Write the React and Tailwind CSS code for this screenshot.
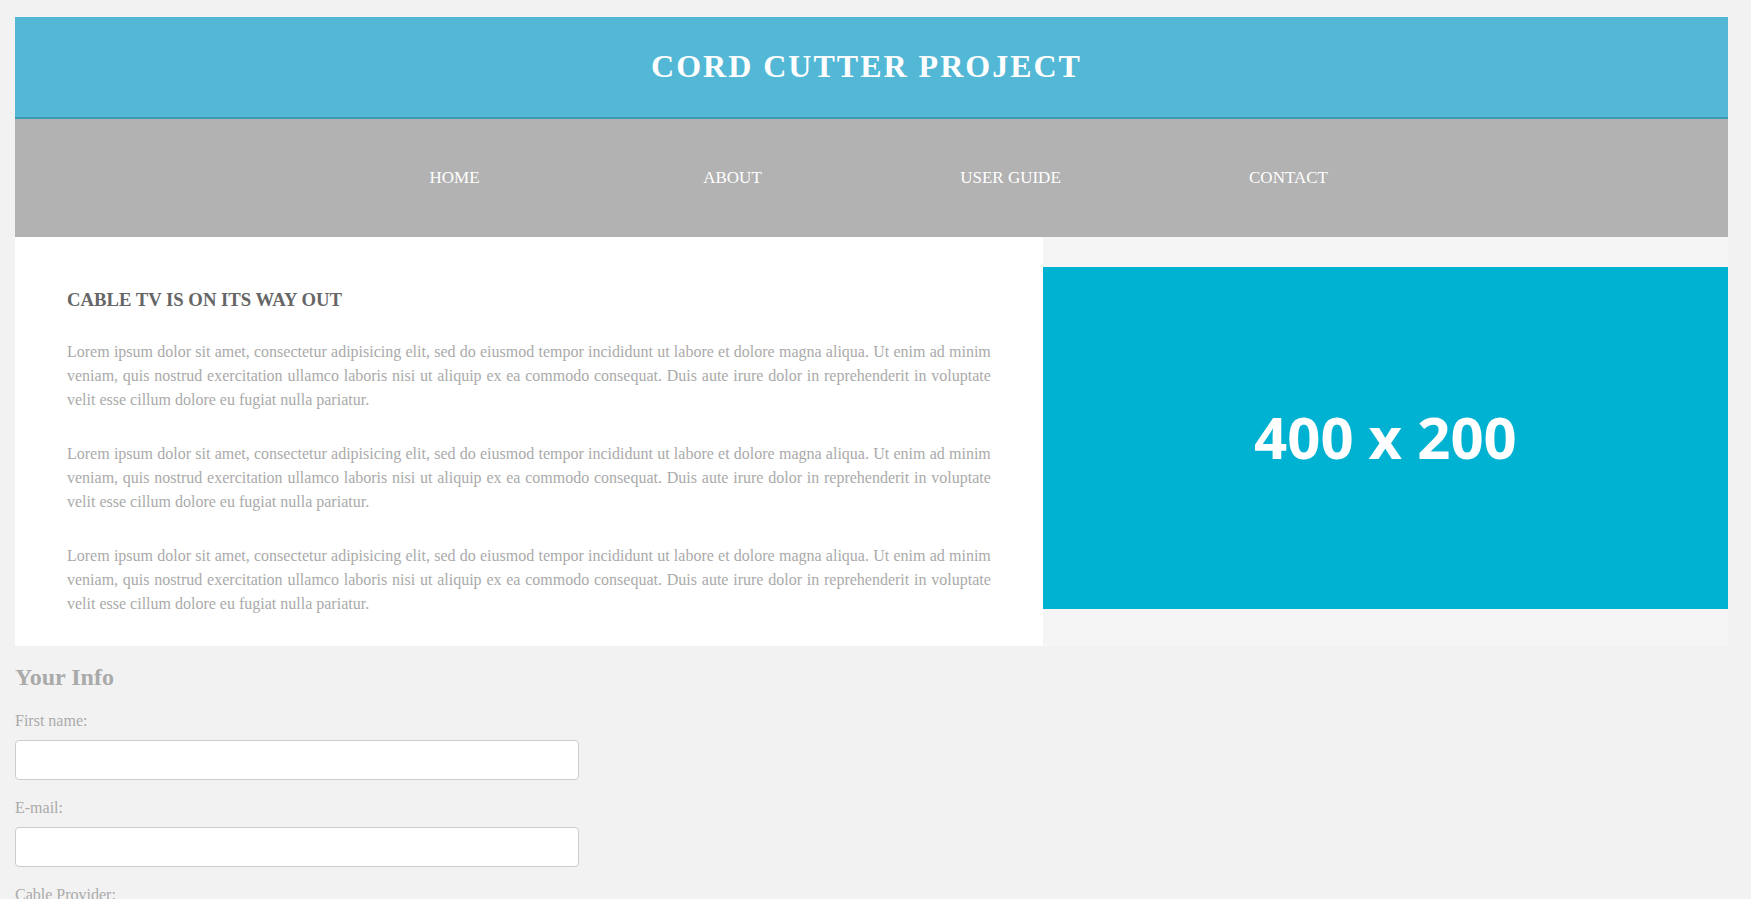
const lorem =
  "Lorem ipsum dolor sit amet, consectetur adipisicing elit, sed do eiusmod tempor incididunt ut labore et dolore magna aliqua. Ut enim ad minim veniam, quis nostrud exercitation ullamco laboris nisi ut aliquip ex ea commodo consequat. Duis aute irure dolor in reprehenderit in voluptate velit esse cillum dolore eu fugiat nulla pariatur.";

const navItems = ["Home", "About", "User Guide", "Contact"];

function App() {
  return (
    <div className="min-h-screen bg-[#f2f2f2] pt-[17px] pb-10 font-['Liberation_Serif',serif]">
      <div className="ml-[15px] w-[1713px]">
        {/* Header */}
        <header className="h-[102px] bg-[#52b8d6] border-b-2 border-[#3c9ab2] flex items-center justify-center pr-[10px] pb-[2px]">
          <h1 className="text-[32px] font-bold tracking-[2px] text-white uppercase">
            Cord Cutter Project
          </h1>
        </header>

        {/* Nav */}
        <nav className="h-[118px] bg-[#b2b2b2] flex items-center justify-center">
          {navItems.map((item) => (
            <a
              key={item}
              href="#"
              className="w-[278px] text-center text-[17px] text-white uppercase"
            >
              {item}
            </a>
          ))}
        </nav>

        {/* Main */}
        <div className="flex">
          <div className="w-[60%] bg-white px-[52px] pt-[52px]">
            <h2 className="text-[18.7px] leading-[1.15] font-bold text-[#666] uppercase mb-[29px]">
              Cable TV is on its way out
            </h2>
            {[0, 1, 2].map((i) => (
              <p
                key={i}
                className="text-[16px] leading-[24px] text-[#aaa] text-justify mb-[30px]"
              >
                {lorem}
              </p>
            ))}
          </div>
          <div className="w-[40%] bg-[#f5f5f5] pt-[30px]">
            <div className="h-[342px] bg-[#00b2d2] flex items-center justify-center pb-[4px]">
              <span className="text-[58px] font-bold text-white font-['Open_Sans',sans-serif]">
                400 x 200
              </span>
            </div>
          </div>
        </div>

        {/* Form */}
        <form className="w-[564px] pt-[13px]">
          <h3 className="text-[24px] font-bold text-[#aaa] mb-[14px]">Your Info</h3>

          <label className="block text-[16px] text-[#aaa] mb-[7px]">First name:</label>
          <input
            type="text"
            className="block w-full h-[40px] bg-white border border-[#ccc] rounded-[4px] mb-[16px] px-3"
          />

          <label className="block text-[16px] text-[#aaa] mb-[7px]">E-mail:</label>
          <input
            type="email"
            className="block w-full h-[40px] bg-white border border-[#ccc] rounded-[4px] mb-[16px] px-3"
          />

          <label className="block text-[16px] text-[#aaa] mb-[7px]">Cable Provider:</label>
          <select className="block w-full h-[40px] bg-white border border-[#ccc] rounded-[4px] mb-[16px] px-3 text-[#666]">
            <option>Comcast</option>
            <option>Time Warner</option>
            <option>Dish</option>
            <option>DirecTV</option>
          </select>

          <button
            type="button"
            className="px-6 py-2 bg-[#52b8d6] text-white rounded-[4px]"
          >
            Submit
          </button>
        </form>
      </div>
    </div>
  );
}

export default App;
